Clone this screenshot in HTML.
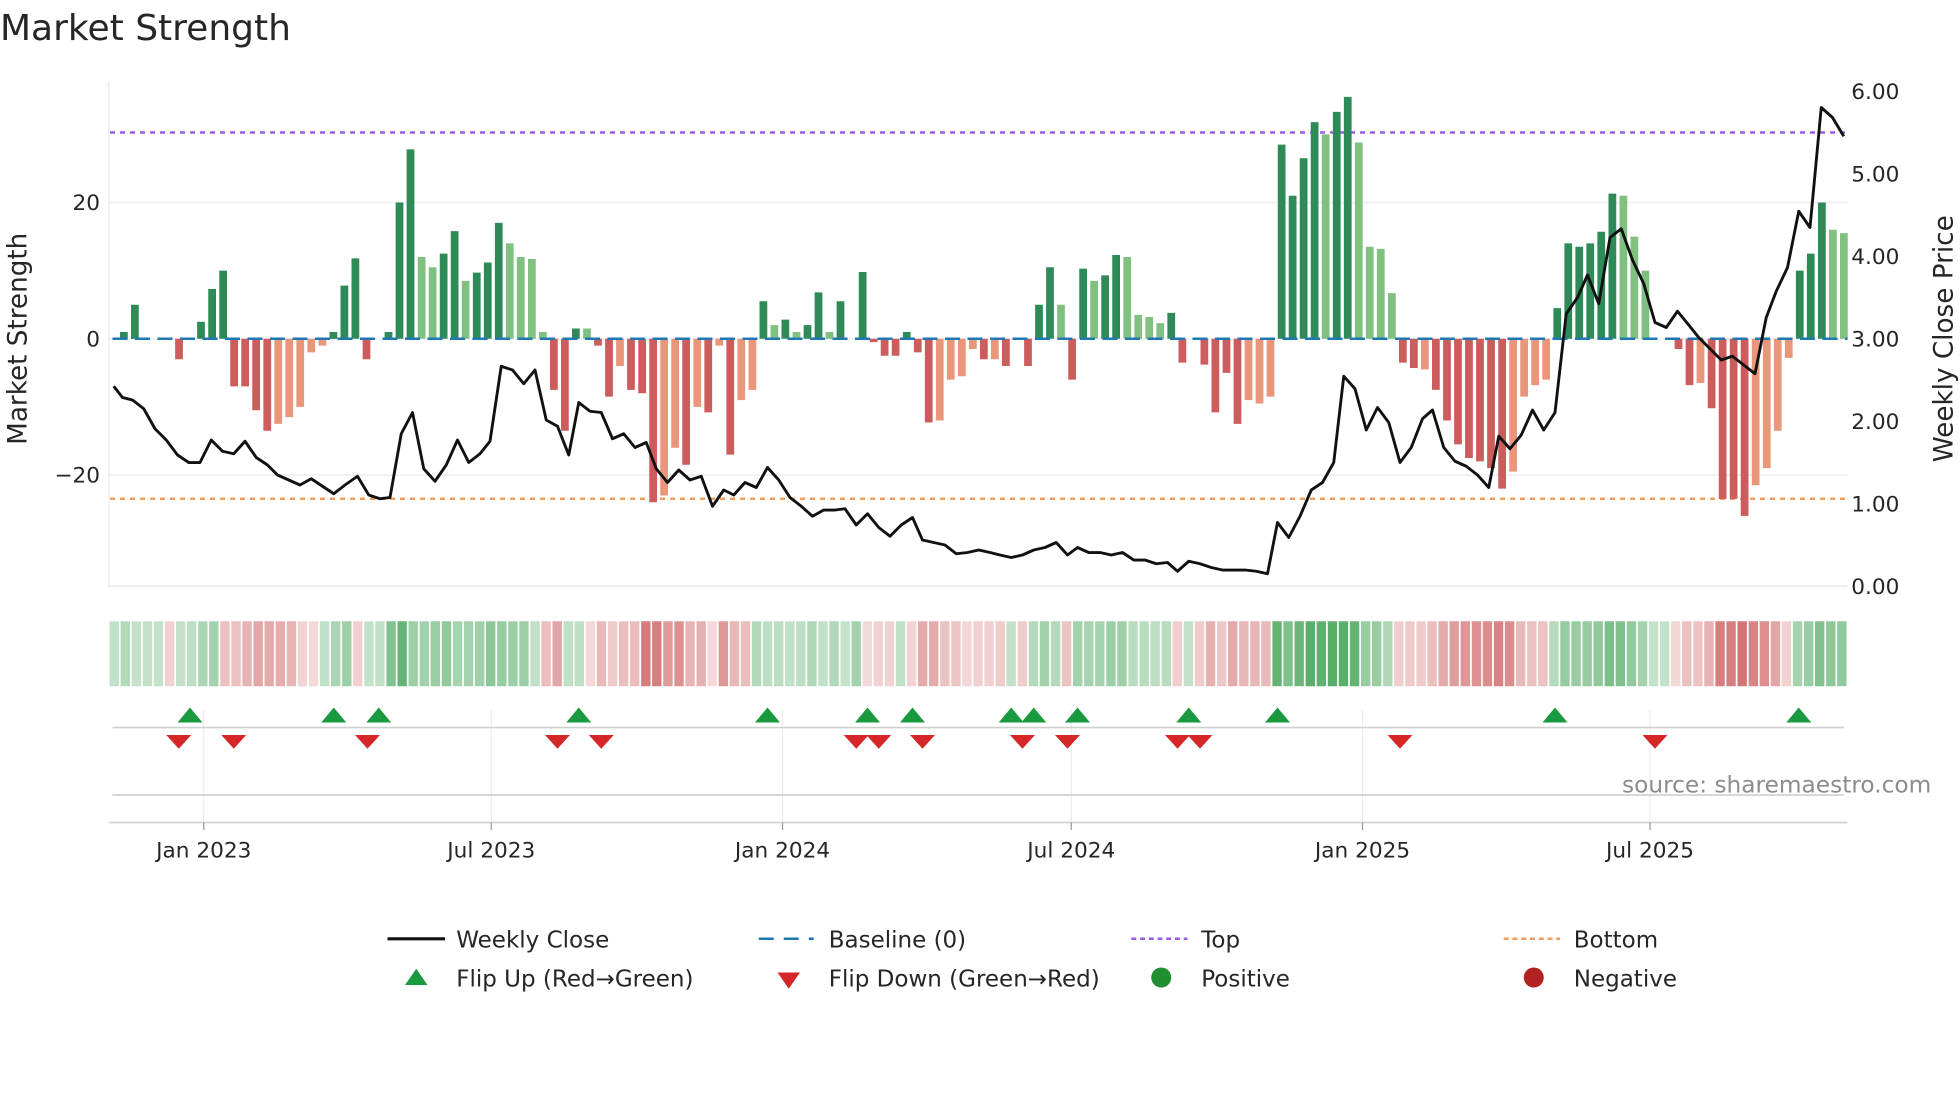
<!DOCTYPE html>
<html><head><meta charset="utf-8"><style>
html,body{margin:0;padding:0;background:#fff;overflow:hidden}
svg{display:block}
text{font-family:"DejaVu Sans","Liberation Sans",sans-serif;fill:#262626}
</style></head><body>
<svg id="s" width="1960" height="1102" viewBox="0 0 1568 881.6" xmlns="http://www.w3.org/2000/svg">
<rect width="1568" height="882" fill="#fff"/>
<text x="0" y="32" font-size="28.8" fill="#333">Market Strength</text>
<g id="g"></g>
<text x="1545" y="634" font-size="18.6" text-anchor="end" style="fill:#8c8c8c">source: sharemaestro.com</text>
<text transform="translate(21,271) rotate(-90)" font-size="21" text-anchor="middle">Market Strength</text>
<text transform="translate(1562,271) rotate(-90)" font-size="21" text-anchor="middle">Weekly Close Price</text>
<g font-size="17.3">
<text x="80" y="168" text-anchor="end">20</text>
<text x="80" y="277" text-anchor="end">0</text>
<text x="80" y="386" text-anchor="end">−20</text>
<text x="1481" y="79">6.00</text><text x="1481" y="145">5.00</text><text x="1481" y="211">4.00</text>
<text x="1481" y="277">3.00</text><text x="1481" y="343">2.00</text><text x="1481" y="409">1.00</text><text x="1481" y="475">0.00</text>
<text x="163" y="686" text-anchor="middle">Jan 2023</text><text x="393" y="686" text-anchor="middle">Jul 2023</text>
<text x="626" y="686" text-anchor="middle">Jan 2024</text><text x="857" y="686" text-anchor="middle">Jul 2024</text>
<text x="1090" y="686" text-anchor="middle">Jan 2025</text><text x="1320" y="686" text-anchor="middle">Jul 2025</text>
</g>
<g font-size="18.4">
<line x1="310" y1="751" x2="356" y2="751" stroke="#111" stroke-width="2.5"/><text x="365" y="758">Weekly Close</text>
<line x1="607" y1="751" x2="651" y2="751" stroke="#1f77b4" stroke-width="2" stroke-dasharray="12,8"/><text x="663" y="758">Baseline (0)</text>
<line x1="905" y1="751" x2="950" y2="751" stroke="#9b5de5" stroke-width="2" stroke-dasharray="4,3"/><text x="961" y="758">Top</text>
<line x1="1203" y1="751" x2="1248" y2="751" stroke="#f0a05a" stroke-width="2" stroke-dasharray="4,3"/><text x="1259" y="758">Bottom</text>
<polygon points="324,788 342,788 333,775" fill="#1a9a3f"/><text x="365" y="789">Flip Up (Red→Green)</text>
<polygon points="622,778 640,778 631,791" fill="#d62728"/><text x="663" y="789">Flip Down (Green→Red)</text>
<circle cx="929" cy="782" r="8" fill="#1f8f2f"/><text x="961" y="789">Positive</text>
<circle cx="1227" cy="782" r="8" fill="#b22222"/><text x="1259" y="789">Negative</text>
</g>
</svg>
<script>
var g=document.getElementById('g'),h='';
function L(x1,y1,x2,y2,c,w,d){h+='<line x1="'+x1+'" y1="'+y1+'" x2="'+x2+'" y2="'+y2+'" stroke="'+c+'" stroke-width="'+w+'"'+(d?' stroke-dasharray="'+d+'"':'')+'/>';}
[162,271,380].forEach(function(y){L(87,y,1478,y,'#eef0f3',1.5)});
L(87,469,1478,469,'#eef0f3',2);L(87,65,87,470,'#eef0f3',1.5);
var months=[163,393,626,857,1090,1320];
months.forEach(function(x){L(x,568,x,658,'#ececec',1)});
L(90,582,1475,582,'#cfcfcf',1.3);L(90,636,1475,636,'#cfcfcf',1.3);L(87,658,1478,658,'#cfcfcf',1.3);
months.forEach(function(x){L(x,658,x,664,'#999',1)});
var B=[[1,0],[5,0],[0,0],[0,0],[0,0],[-3,0],[0,0],[2.5,0],[7.3,0],[10,0],[-7,0],[-7,0],[-10.5,0],[-13.5,0],[-12.5,1],[-11.5,1],[-10,1],[-2,1],[-1,1],[1,0],[7.8,0],[11.8,0],[-3,0],[0,0],[1,0],[20,0],[27.8,0],[12,1],[10.5,1],[12.5,0],[15.8,0],[8.5,1],[9.7,0],[11.2,0],[17,0],[14,1],[12,1],[11.7,1],[1,1],[-7.5,0],[-13.5,0],[1.5,0],[1.5,1],[-1,0],[-8.5,0],[-4,1],[-7.5,0],[-8,0],[-24,0],[-23,1],[-16,1],[-18.5,0],[-10,1],[-10.8,0],[-1,1],[-17,0],[-9,1],[-7.5,1],[5.5,0],[2,1],[2.8,0],[1,1],[2,0],[6.8,0],[1,1],[5.5,0],[0,0],[9.8,0],[-0.5,0],[-2.5,0],[-2.5,0],[1,0],[-2,0],[-12.3,0],[-12,1],[-6,1],[-5.5,1],[-1.5,1],[-3,0],[-3,1],[-4,0],[0,0],[-4,0],[5,0],[10.5,0],[5,1],[-6,0],[10.3,0],[8.5,1],[9.3,0],[12.3,0],[12,1],[3.5,1],[3.2,1],[2.3,1],[3.8,0],[-3.5,0],[0,0],[-3.8,0],[-10.8,0],[-5,0],[-12.5,0],[-9,1],[-9.5,1],[-8.5,1],[28.5,0],[21,0],[26.5,0],[31.8,0],[30,1],[33.3,0],[35.5,0],[28.8,1],[13.5,1],[13.2,1],[6.7,1],[-3.5,0],[-4.3,0],[-4.5,1],[-7.5,0],[-12,0],[-15.5,0],[-17.5,0],[-18,0],[-19,0],[-22,0],[-19.5,1],[-8.5,1],[-6.8,1],[-6,1],[4.5,0],[14,0],[13.5,0],[14,0],[15.7,0],[21.3,0],[21,1],[15,1],[10,1],[0,0],[0,0],[-1.5,0],[-6.8,0],[-6.5,1],[-10.2,0],[-23.5,0],[-23.5,0],[-26,0],[-21.5,1],[-19,1],[-13.5,1],[-2.8,1],[10,0],[12.5,0],[20,0],[16,1],[15.5,1]];
var n=B.length,x0=99,x1=1475,dx=(x1-x0)/(n-1);
var sw=(1478-87)/n;
B.forEach(function(b,i){var x=87+i*sw,v=b[0];var c;
 if(v>=0){var t=0.25+0.6*Math.min(1,(v+3)/35);c='rgba(60,160,80,'+t.toFixed(2)+')';}
 else{var t=0.2+0.6*Math.min(1,-v/26);c='rgba(200,80,80,'+t.toFixed(2)+')';}
 h+='<rect x="'+(x+0.6).toFixed(1)+'" y="497" width="'+(sw-1.4).toFixed(1)+'" height="52" fill="'+c+'"/>';});
L(88,106,1478,106,'#9b5de5',2,'4,4');L(88,399,1478,399,'#f0a05a',2,'4,4');
B.forEach(function(b,i){var x=x0+i*dx,v=b[0];if(v==0)return;var c=v>0?(b[1]?'#80c080':'#2e8b57'):(b[1]?'#e9967a':'#cd5c5c');
 var y=v>0?271-v*5.45:271,hh=Math.abs(v)*5.45;h+='<rect x="'+(x-3).toFixed(1)+'" y="'+y.toFixed(1)+'" width="6.2" height="'+hh.toFixed(1)+'" fill="'+c+'"/>';});
L(90,271,1478,271,'#1f77b4',2,'12,6');
var P=[91,309,98,318,106,320,115,327,124,343,133,352,142,364,151,370,160,370,169,352,178,361,187,363,196,353,205,366,214,372,222,380,231,384,240,388,249,383,258,389,267,395,276,388,286,381,295,396,304,399,312,398,321,347,330,330,339,375,348,385,357,372,366,352,375,370,384,363,392,353,401,293,410,296,419,307,428,296,437,336,446,341,455,364,463,322,472,329,481,330,490,351,499,347,508,358,517,354,525,375,534,386,543,376,552,384,561,381,570,405,579,392,587,396,596,386,605,390,614,374,623,384,632,398,641,405,650,413,659,408,668,408,676,407,685,420,694,411,703,422,712,429,721,420,730,414,738,432,747,434,756,436,765,443,774,442,783,440,792,442,800,444,809,446,818,444,827,440,836,438,845,434,854,444,862,438,871,442,880,442,889,444,898,442,907,448,916,448,925,451,934,450,942,457,951,449,960,451,969,454,978,456,987,456,996,456,1005,457,1014,459,1022,418,1031,430,1040,413,1049,392,1058,386,1067,370,1075,301,1084,311,1093,344,1102,326,1111,338,1120,370,1129,358,1138,335,1146,328,1155,358,1164,369,1173,373,1182,380,1191,390,1199,349,1208,359,1217,348,1226,328,1235,344,1244,330,1253,251,1262,238,1270,220,1279,243,1288,190,1297,183,1306,208,1315,227,1324,258,1333,262,1342,249,1351,260,1359,270,1368,279,1377,288,1386,285,1395,292,1404,299,1413,254,1421,233,1430,214,1439,169,1448,182,1457,86,1466,94,1475,109];
h+='<polyline points="'+P.join(' ')+'" fill="none" stroke="#111" stroke-width="2.3" stroke-linejoin="round"/>';
[152,267,303,463,614,694,730,809,827,862,951,1022,1244,1439].forEach(function(x){h+='<polygon points="'+(x-10)+',578 '+(x+10)+',578 '+x+',566" fill="#1a9a3f"/>';});
[143,187,294,446,481,685,703,738,818,854,942,960,1120,1324].forEach(function(x){h+='<polygon points="'+(x-10)+',588 '+(x+10)+',588 '+x+',599" fill="#d62728"/>';});
g.innerHTML=h;
</script>
</body></html>
